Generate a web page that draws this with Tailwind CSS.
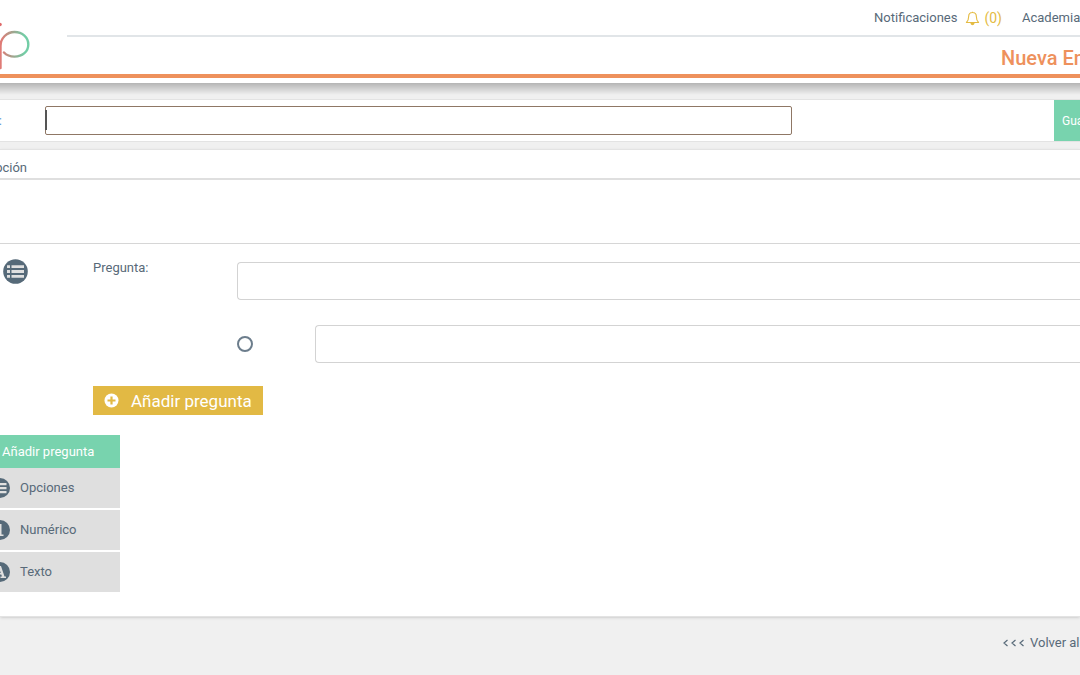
<!DOCTYPE html>
<html lang="es">
<head>
  <meta charset="UTF-8" />
  <meta name="viewport" content="width=device-width, initial-scale=1" />
  <title>Nueva Encuesta</title>
  <script src="https://cdn.jsdelivr.net/npm/@tailwindcss/browser@4"></script>
</head>
<body class="bg-[#f0f0f0] text-[#586a79] font-['Roboto',sans-serif] text-[13px] leading-5 min-h-screen overflow-x-hidden">
  <header class="bg-white">
    <div class="flex border-b-4 border-[#ee915c]">
      <a href="#" aria-label="Inicio" class="w-[67px] shrink-0">
        <svg class="block" width="36" height="74" viewBox="0 0 36 74" fill="none">
          <defs>
            <linearGradient id="trazo" x1="0" y1="0" x2="29" y2="0" gradientUnits="userSpaceOnUse">
              <stop offset="0.05" stop-color="#df7b76" />
              <stop offset="0.5" stop-color="#98ab92" />
              <stop offset="0.85" stop-color="#72cda6" />
            </linearGradient>
          </defs>
          <path d="M0.5 68V46C0.5 38 7 32 14.5 32C22.5 32 28.3 37.5 28.3 44.4C28.3 51.5 22.5 56.6 14.5 56.6C10 56.6 6.500 55.200 4 52.500" stroke="url(#trazo)" stroke-width="2.400" stroke-linecap="round" />
          <circle cx="0" cy="24.500" r="1.800" fill="#df6b6b" />
        </svg>
      </a>
      <div class="flex-1 min-w-0">
        <nav class="flex justify-end items-center h-[37px] border-b-2 border-[#e1e5e8]">
          <a href="#" class="flex items-center whitespace-nowrap">Notificaciones
            <svg class="ml-2 mr-1" width="15" height="16" viewBox="0 0 16 16" fill="none" stroke="#e4bb43" stroke-width="1.200" stroke-linejoin="round">
              <path d="M8 1.200V2.200M1.500 12.800C3.200 11.300 3.900 9.500 3.900 6.500C3.900 4 5.700 2.200 8 2.200C10.300 2.200 12.100 4 12.100 6.500C12.100 9.500 12.800 11.300 14.500 12.800Z" />
              <path d="M6.300 13.300C6.500 15.600 9.500 15.600 9.700 13.300Z" fill="#e4bb43" />
            </svg>
            <span class="text-[14px] text-[#e4bb43]">(0)</span>
          </a>
          <a href="#" class="ml-5 w-[58px] whitespace-nowrap overflow-hidden">Academia</a>
        </nav>
        <div class="flex justify-end items-center h-[37px] pt-1">
          <h1 class="w-[79px] whitespace-nowrap overflow-hidden text-[20px] leading-7 font-medium text-[#ee915c]">Nueva Encuesta</h1>
        </div>
      </div>
    </div>
    <div class="h-[5px]"></div>
  </header>
  <div class="h-3 bg-linear-to-b from-black/25 to-transparent"></div>

  <main>
    <form>
      <section class="mt-1 flex items-center h-[43px] bg-white border-y border-[#e3e3e3]">
        <label for="titulo" class="w-[45px] shrink-0 flex text-[#5b9bd5]"><span class="flex w-0.5 justify-end whitespace-nowrap">Título:</span></label>
        <div class="relative flex-1 mr-[262px]">
          <input id="titulo" type="text" class="block w-full h-[29px] px-1 bg-white border border-[#8f7765] rounded-xs outline-none" />
          <span class="absolute left-0 top-1 w-0.5 h-5 bg-[#555555]"></span>
        </div>
        <button type="submit" class="w-[26px] self-stretch pl-2 bg-[#78d3ae] text-white text-[12px] text-left whitespace-nowrap overflow-hidden">Guardar</button>
      </section>

      <section class="mt-[7px] bg-white border-y border-[#e3e3e3] shadow-sm pb-6">
        <div class="h-[30px] pt-2 border-b-2 border-[#dfdfdf]">
          <label for="descripcion" class="flex w-[27px] justify-end whitespace-nowrap">Descripción</label>
        </div>
        <textarea id="descripcion" class="block w-full h-16 resize-none border-b border-[#d6d6d6] outline-none"></textarea>

        <div class="mt-[18px] flex items-start">
          <svg class="ml-[3px] -mt-[3px] shrink-0" width="25" height="25" viewBox="0 0 25 25">
            <circle cx="12.500" cy="12.500" r="12.300" fill="#566a79" />
            <path d="M4 6.200H7V9H4ZM8.500 6.200H21V9H8.500ZM4 11.100H7V13.900H4ZM8.500 11.100H21V13.900H8.500ZM4 16H7V18.800H4ZM8.500 16H21V18.800H8.500Z" fill="#e0e0e0" />
          </svg>
          <label for="pregunta" class="-mt-1 ml-[65px] w-36 shrink-0">Pregunta:</label>
          <input id="pregunta" type="text" class="flex-1 min-w-0 h-[38px] px-3 border border-r-0 border-[#d3d3d3] rounded-l-sm outline-none" />
        </div>

        <div class="mt-[25px] flex items-center">
          <input type="radio" name="opcion" aria-label="Opción correcta" class="ml-[237px] appearance-none size-4 shrink-0 border-2 border-[#6c7d8c] rounded-full bg-white" />
          <input type="text" aria-label="Opción" class="ml-[62px] flex-1 min-w-0 h-[38px] px-3 border border-r-0 border-[#d3d3d3] rounded-l-sm outline-none" />
        </div>

        <button type="button" class="mt-[23px] ml-[93px] flex items-center h-[29px] px-[11px] bg-[#e2b944] text-white text-[17px] whitespace-nowrap">
          <svg class="mr-3" width="15" height="15" viewBox="0 0 15 15">
            <circle cx="7.500" cy="7.500" r="7" fill="#fff" />
            <path d="M7.500 3.500V11.500M3.500 7.500H11.500" stroke="#e2b944" stroke-width="2.200" />
          </svg>
          Añadir pregunta
        </button>

        <div class="mt-5 w-[120px] flex flex-col">
          <h2 class="h-[33px] pl-0.5 flex items-center bg-[#78d3ae] text-white">Añadir pregunta</h2>
          <div class="flex flex-col gap-0.5">
            <button type="button" class="flex items-center h-10 bg-[#dfdfdf] text-left">
              <svg class="mr-2.5" width="10" height="20" viewBox="10 0 10 20">
                <circle cx="10" cy="10" r="10" fill="#566a79" />
                <path d="M7 5H16.500V7.200H7ZM7 9H16.500V11.200H7ZM7 13H16.500V15.200H7Z" fill="#e0e0e0" />
              </svg>
              Opciones
            </button>
            <button type="button" class="flex items-center h-10 bg-[#dfdfdf] text-left">
              <svg class="mr-2.5" width="10" height="20" viewBox="10 0 10 20">
                <circle cx="10" cy="10" r="10" fill="#566a79" />
                <path d="M8.500 4H11.500V14.500H13.500V16H7V14.500H8.500Z" fill="#e0e0e0" />
              </svg>
              Numérico
            </button>
            <button type="button" class="flex items-center h-10 bg-[#dfdfdf] text-left">
              <svg class="mr-2.5" width="10" height="20" viewBox="10 0 10 20">
                <circle cx="10" cy="10" r="10" fill="#566a79" />
                <path d="M9 4H11L14.500 14.500H16V16H10.500V14.500H12L11.300 12.500H7V11H10.800L9 6Z" fill="#e0e0e0" />
              </svg>
              Texto
            </button>
          </div>
        </div>
      </section>
    </form>
  </main>

  <footer class="flex justify-end pt-4">
    <a href="#" class="flex items-center w-[77px] whitespace-nowrap overflow-hidden">
      <svg class="mr-1.5 shrink-0" width="21" height="8" viewBox="0 0 21 8" fill="none" stroke="#586a79" stroke-width="1.200">
        <path d="M4.500 1L1 4L4.500 7M12.500 1L9 4L12.500 7M20.500 1L17 4L20.500 7" />
      </svg>
      Volver al listado
    </a>
  </footer>
</body>
</html>
